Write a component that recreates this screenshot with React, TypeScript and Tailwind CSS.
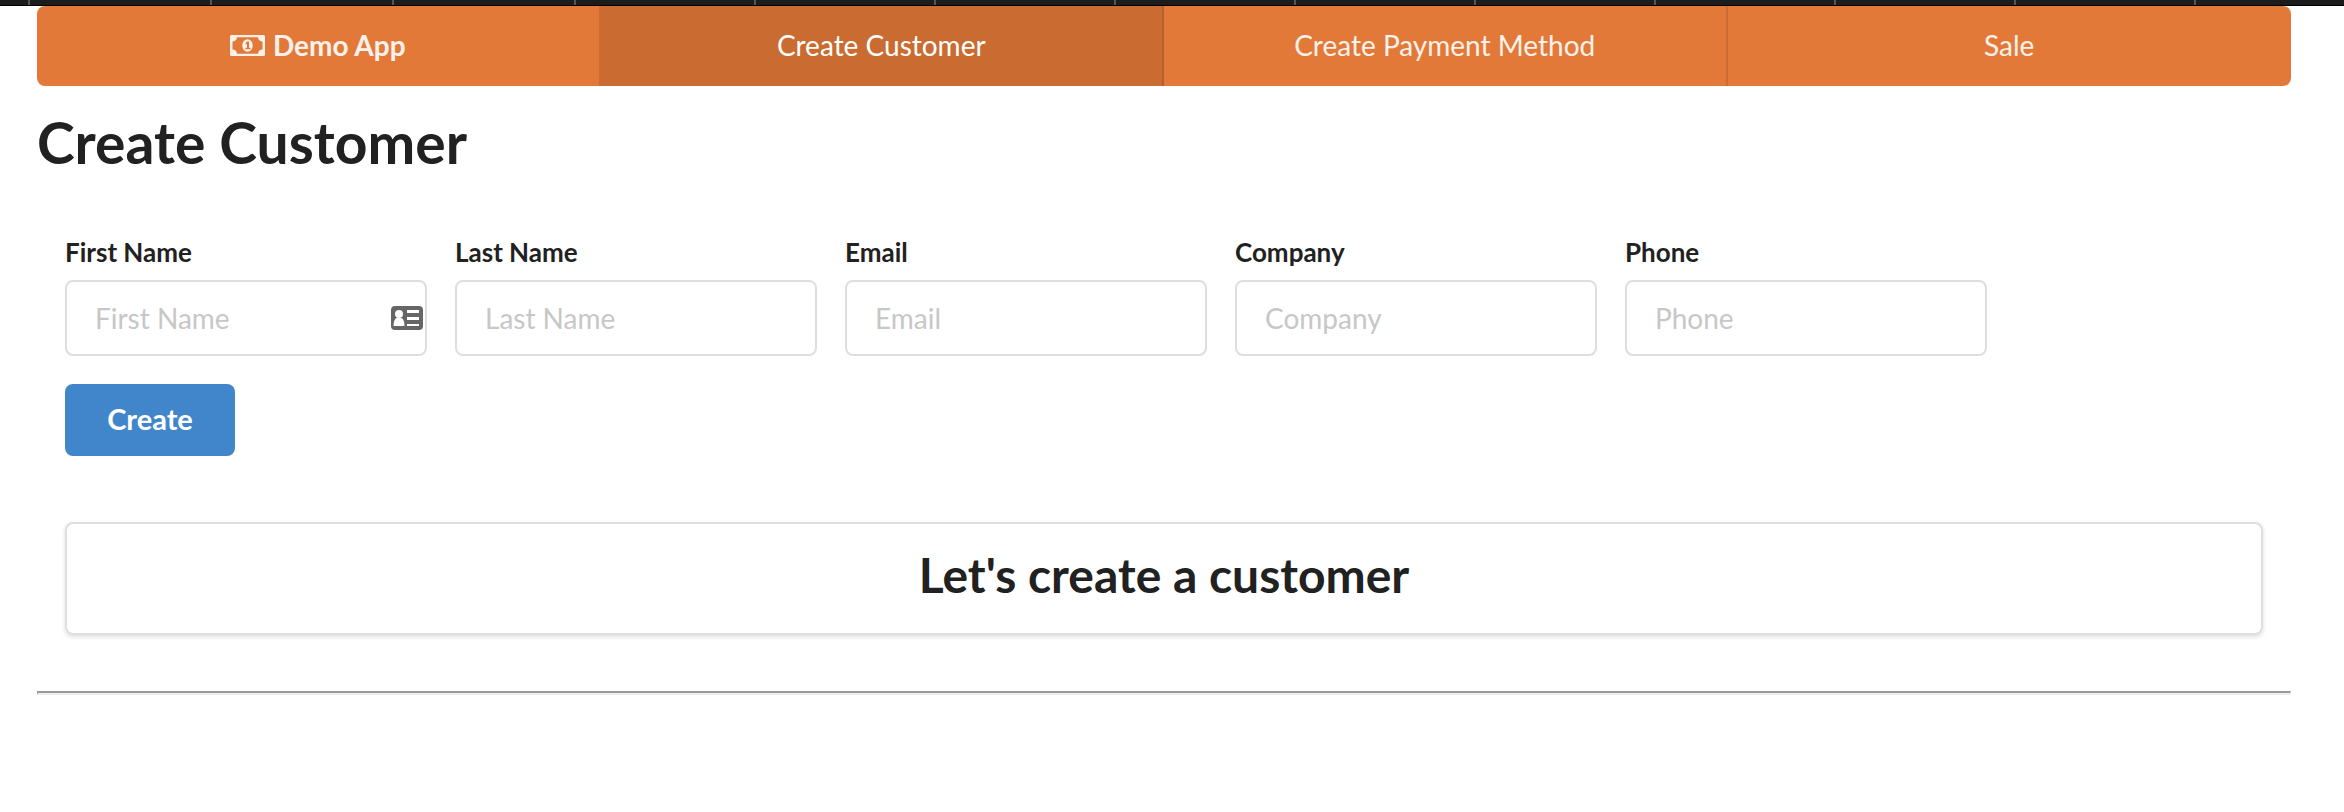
const fields = ["First Name", "Last Name", "Email", "Company", "Phone"];
const ticks = Array.from({ length: 13 }, (_, i) => i);

function MoneyIcon() {
  return (
    <svg className="h-[21px] w-[35px]" viewBox="0 0 35 21" aria-hidden="true">
      <path fill="currentColor" fillRule="evenodd" d="M1.500 0h32A1.500 1.500 0 0 1 35 1.500v18a1.500 1.500 0 0 1-1.500 1.500h-32A1.500 1.500 0 0 1 0 19.500v-18A1.500 1.500 0 0 1 1.500 0ZM7 2.200c0 2.500-2 4.300-4.500 4.300v8c2.500 0 4.500 1.800 4.500 4.300h21c0-2.500 2-4.300 4.500-4.300v-8C30 6.500 28 4.700 28 2.200Z" />
      <ellipse cx="17.500" cy="10.500" rx="5.200" ry="6.200" fill="currentColor" />
      <path fill="#e07837" d="M17 6.500h2v6.300h1.500v1.500h-5v-1.500H17V9l-1.400.4V8Z" />
    </svg>
  );
}

function ContactIcon() {
  return (
    <svg className="h-6 w-8" viewBox="0 0 32 24" aria-hidden="true">
      <rect width="32" height="24" rx="4" fill="#666" />
      <circle cx="8" cy="8" r="4" fill="#fff" />
      <path fill="#fff" d="M5.500 12h5c2 1 3 4 3 8H2.500c0-4 1-7 3-8ZM16 4h12v3H16zM16 11h12v3H16zM16 18h12v2H16z" />
    </svg>
  );
}

export default function App() {
  return (
    <div className="min-h-screen bg-white font-['Lato',sans-serif] text-[#212121]">
      <div className="flex h-[6px] overflow-hidden border-b border-black bg-[#1c1c1c] pl-7">
        {ticks.map((t) => (
          <span key={t} className={t < 3 ? "w-[182px] shrink-0 border-l-2 border-[#555]" : "w-[180px] shrink-0 border-l-2 border-[#555]"} />
        ))}
      </div>
      <div className="pr-[53px] pl-[37px]">
        <nav className="grid h-20 grid-cols-4 overflow-hidden rounded-lg bg-[#e27938] text-[28px] text-white/90">
          <a href="#home" className="flex items-center justify-center gap-2 border-r-2 border-black/10 pb-0.5 font-bold"><MoneyIcon />Demo App</a>
          <a href="#customer" className="flex items-center justify-center border-r-2 border-black/10 bg-[#ca6c31] pb-0.5 text-white">Create Customer</a>
          <a href="#payment" className="flex items-center justify-center border-r-2 border-black/10 pb-0.5">Create Payment Method</a>
          <a href="#sale" className="flex items-center justify-center pb-0.5">Sale</a>
        </nav>
        <h1 className="mt-6 text-[57px] leading-[64px] font-bold">Create Customer</h1>
        <main className="px-7 pt-[62px]">
          <form>
            <div className="flex gap-7">
              {fields.map((f, i) => (
                <label key={f} className="relative w-[362px] text-[26px] leading-8 font-bold">
                  {f}
                  <input placeholder={f} className="mt-3 block h-[76px] w-full rounded-lg border-2 border-[#dedede] px-7 text-[28px] font-normal placeholder:text-[#c7c7c7]" />
                  {i === 0 && <span className="absolute right-1 bottom-[26px]"><ContactIcon /></span>}
                </label>
              ))}
            </div>
            <button type="button" className="mt-7 h-[72px] w-[170px] rounded-lg bg-[#4186cb] pb-0.5 text-[29px] font-bold text-white">Create</button>
          </form>
          <section className="mt-[66px] rounded-lg border-2 border-[#dedede] pt-[23px] pb-[30px] text-center shadow-[0_2px_4px_rgba(34,36,38,0.15)]">
            <h2 className="text-[48px] leading-[56px] font-bold">Let's create a customer</h2>
          </section>
        </main>
        <hr className="mt-[56px] border-t-2 border-r border-b-2 border-l border-t-[#9a9a9a] border-r-[#eee] border-b-[#eee] border-l-[#9a9a9a]" />
      </div>
    </div>
  );
}
